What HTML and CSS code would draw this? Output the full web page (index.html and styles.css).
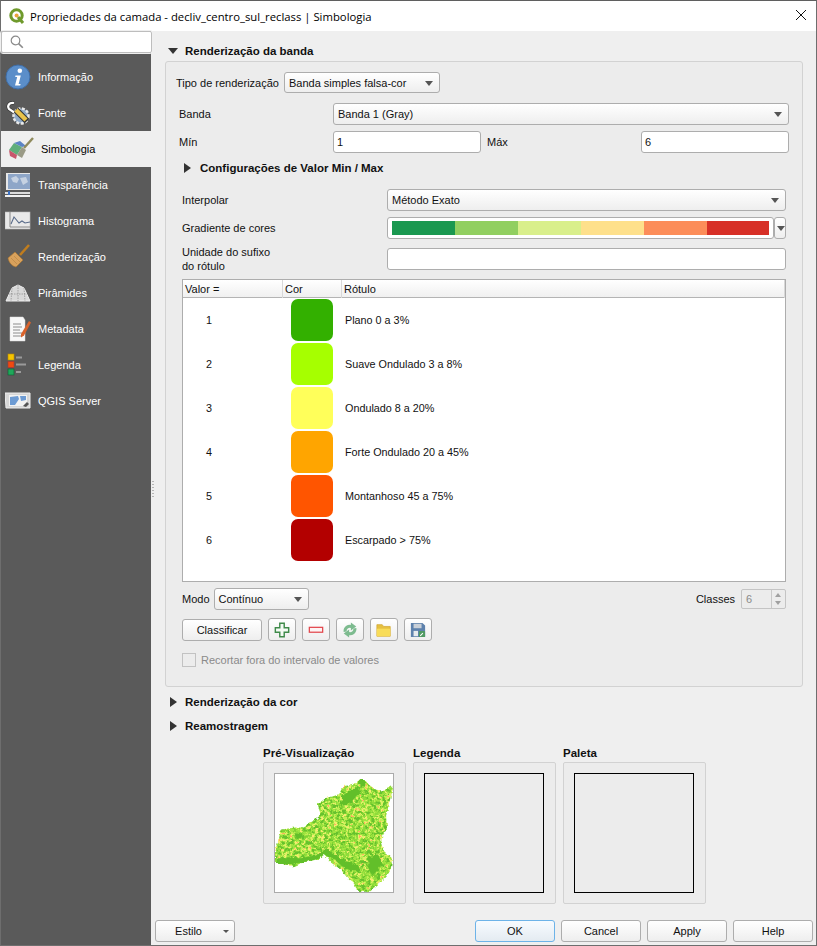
FILE: index.html
```html
<!DOCTYPE html>
<html lang="pt-BR">
<head>
  <meta charset="UTF-8" />
  <title>Propriedades da camada - decliv_centro_sul_reclass | Simbologia</title>
  <link rel="stylesheet" href="styles.css">
</head>
<body>

<div class="window">
  <header class="titlebar">
    <svg class="logo" viewBox="0 0 16 16">
      <circle cx="7.5" cy="7.5" r="5.7" fill="none" stroke="#6f9a2c" stroke-width="3"/>
      <path d="M9 9l5 6" stroke="#6f9a2c" stroke-width="3"/>
      <circle cx="7.6" cy="7.6" r="2" fill="#e8a33a"/>
    </svg>
    <span class="title-text">Propriedades da camada - decliv_centro_sul_reclass | Simbologia</span>
    <svg class="close" viewBox="0 0 10 10"><path d="M0 0l10 10M10 0L0 10" stroke="#111" stroke-width="1" fill="none"/></svg>
  </header>

  <div class="dialog-body">
    <nav class="sidebar">
      <div class="search">
        <svg class="search-icon" viewBox="0 0 14 14"><circle cx="5.5" cy="5.5" r="4.3" fill="none" stroke="#8a8a8a" stroke-width="1.2"/><path d="M8.6 8.6l4.2 4.2" stroke="#8a8a8a" stroke-width="1.6"/></svg>
      </div>
      <ul class="nav-list">
        <li class="nav-item">
          <svg class="nav-icon" viewBox="0 0 26 26">
            <circle cx="13" cy="13" r="12" fill="#5b8ec9" stroke="#3f6da6"/>
            <circle cx="14.8" cy="6.8" r="2.3" fill="#fff"/>
            <path d="M10.5 11.5h5.3l-2.2 8.5h2l-.4 1.6h-5.2l2.2-8.5h-2z" fill="#fff"/>
          </svg>
          <span>Informação</span>
        </li>
        <li class="nav-item">
          <svg class="nav-icon" viewBox="0 0 26 26">
            <circle cx="16" cy="16" r="7.5" fill="#8fa9c6" stroke="#e9e9e9" stroke-width="2.5" stroke-dasharray="3 1.5"/>
            <path d="M9 3C4 2 2 6 4 9l6 4" fill="none" stroke="#333" stroke-width="3.4"/>
            <path d="M9 3C4 2 2 6 4 9l6 4" fill="none" stroke="#fff" stroke-width="2.2"/>
            <path d="M11 10l11 11" stroke="#333" stroke-width="6.4"/>
            <path d="M11 10l10 10" stroke="#e9c24a" stroke-width="4.4"/>
          </svg>
          <span>Fonte</span>
        </li>
        <li class="nav-item active">
          <svg class="nav-icon" viewBox="0 0 26 26">
            <path d="M1 14l5-7 8 4-5 8z" fill="#5fae7a"/>
            <path d="M6 7l6-2 6 5-4 1z" fill="#5b84c4"/>
            <path d="M1 14l8 5-1 4-6-3z" fill="#c8566c"/>
            <path d="M9 19l5-8 4 3-4 8z" fill="#9a9a86"/>
            <path d="M16 12l9-10" stroke="#8f8a5c" stroke-width="2.4"/>
          </svg>
          <span>Simbologia</span>
        </li>
        <li class="nav-item">
          <svg class="nav-icon" viewBox="0 0 26 26">
            <rect x="1" y="1" width="24" height="17" fill="#e8e8e8"/>
            <rect x="3" y="2" width="22" height="15" fill="#8ea6c8"/>
            <path d="M6 6l5-2 3 3-2 4-4-1zM15 6l6-1 2 5-5 3z" fill="#c6d2e2"/>
            <rect x="0" y="20" width="25" height="2" fill="#ddd"/>
            <rect x="3" y="19" width="2" height="5" fill="#3a6fc0"/>
            <rect x="0" y="23" width="25" height="2" fill="#f1f1f1"/>
          </svg>
          <span>Transparência</span>
        </li>
        <li class="nav-item">
          <svg class="nav-icon" viewBox="0 0 26 26">
            <rect x="0" y="4" width="25" height="17" fill="#e9e9e9" stroke="#bbb" stroke-width=".6"/>
            <path d="M5 4v15h20" fill="none" stroke="#888"/>
            <path d="M6 16l3-7 5 6 3-2 3 2 5-1" fill="none" stroke="#5a6c8a" stroke-width="1.1"/>
          </svg>
          <span>Histograma</span>
        </li>
        <li class="nav-item">
          <svg class="nav-icon" viewBox="0 0 26 26">
            <path d="M3 14l7-6 8 8-7 7c-4-1-7-4-8-9z" fill="#d8a15c" stroke="#a8742f" stroke-width=".6"/>
            <path d="M15 11l9-10" stroke="#c07d1e" stroke-width="2.6"/>
            <path d="M6 14l6 6M9 12l6 6" stroke="#b98543" stroke-width=".7"/>
          </svg>
          <span>Renderização</span>
        </li>
        <li class="nav-item">
          <svg class="nav-icon" viewBox="0 0 26 26">
            <path d="M1 21L7 8l6-3 6 3 6 13z" fill="#d9d9d9" stroke="#f0f0f0"/>
            <path d="M13 5v16M7 8l-1 13M19 8l1 13M4 14h18" stroke="#8a8a8a" stroke-width=".7" stroke-dasharray="1.5 1"/>
          </svg>
          <span>Pirâmides</span>
        </li>
        <li class="nav-item">
          <svg class="nav-icon" viewBox="0 0 26 26">
            <path d="M5 1h13l2 3v21H5z" fill="#f8f8f8" stroke="#ddd" stroke-width=".5"/>
            <path d="M8 8h8M8 11h9M8 14h7M8 17h9M8 20h9" stroke="#8c8c8c"/>
            <path d="M16 18l8-13 2 1.5-7 13-3 2z" fill="#d9622b"/>
          </svg>
          <span>Metadata</span>
        </li>
        <li class="nav-item">
          <svg class="nav-icon" viewBox="0 0 26 26">
            <rect x="3" y="2" width="6" height="6" fill="#f5c400" stroke="#b98a00" stroke-width=".6"/>
            <rect x="3" y="9.500" width="6" height="6" fill="#f04a10" stroke="#a33" stroke-width=".6"/>
            <rect x="3" y="17" width="6" height="6" fill="#1fa75a" stroke="#0a5f30" stroke-width=".6"/>
            <path d="M11 5.500h6M11 12.500h10M11 20h5" stroke="#9a9a9a" stroke-width="2"/>
          </svg>
          <span>Legenda</span>
        </li>
        <li class="nav-item">
          <svg class="nav-icon" viewBox="0 0 26 26">
            <path d="M0 5h25v15H1z" fill="#d6d6d6" stroke="#eee"/>
            <rect x="4" y="7" width="18" height="11" fill="#f2f2f2"/>
            <path d="M5 9l8-1 1 3-4 6-5 0zM15 8h6v4l-5 1z" fill="#6d9bd3"/>
            <path d="M18 18l4-4 2 2-3 3z" fill="#555"/>
          </svg>
          <span>QGIS Server</span>
        </li>
      </ul>
    </nav>

    <div class="splitter"></div>

    <main class="content">
      <div class="section-head"><span class="arrow-down"></span>Renderização da banda</div>

      <section class="group">
        <div class="row-tipo">
          <label class="lbl">Tipo de renderização</label>
          <div class="combo combo-tipo">Banda simples falsa-cor<span class="caret"></span></div>
        </div>

        <div class="row-band">
          <label class="lbl">Banda</label>
          <div class="combo">Banda 1 (Gray)<span class="caret"></span></div>
        </div>

        <div class="row-minmax">
          <label class="lbl">Mín</label>
          <div class="input">1</div>
          <label class="lbl">Máx</label>
          <div class="input">6</div>
        </div>

        <div class="sub-head"><span class="arrow-right"></span>Configurações de Valor Min / Max</div>

        <div class="color-form">
          <label class="lbl">Interpolar</label>
          <div class="combo">Método Exato<span class="caret"></span></div>

          <label class="lbl">Gradiente de cores</label>
          <div class="ramp-wrap">
            <div class="ramp">
              <span class="ramp-1"></span><span class="ramp-2"></span><span class="ramp-3"></span>
              <span class="ramp-4"></span><span class="ramp-5"></span><span class="ramp-6"></span>
            </div>
            <div class="ramp-drop"><span class="caret"></span></div>
          </div>

          <label class="lbl lbl-two">Unidade do sufixo<br>do rótulo</label>
          <div class="input"></div>
        </div>

        <div class="table">
          <div class="thead">
            <div class="th th-valor">Valor =</div>
            <div class="th th-cor">Cor</div>
            <div class="th th-label">Rótulo</div>
          </div>
          <div class="trow"><div class="td-val">1</div><div class="swatch swatch-1"></div><div>Plano 0 a 3%</div></div>
          <div class="trow"><div class="td-val">2</div><div class="swatch swatch-2"></div><div>Suave Ondulado 3 a 8%</div></div>
          <div class="trow"><div class="td-val">3</div><div class="swatch swatch-3"></div><div>Ondulado 8 a 20%</div></div>
          <div class="trow"><div class="td-val">4</div><div class="swatch swatch-4"></div><div>Forte Ondulado 20 a 45%</div></div>
          <div class="trow"><div class="td-val">5</div><div class="swatch swatch-5"></div><div>Montanhoso 45 a 75%</div></div>
          <div class="trow"><div class="td-val">6</div><div class="swatch swatch-6"></div><div>Escarpado &gt; 75%</div></div>
        </div>

        <div class="row-mode">
          <label class="lbl">Modo</label>
          <div class="combo combo-mode">Contínuo<span class="caret"></span></div>
          <label class="lbl lbl-classes">Classes</label>
          <div class="spin">6<span class="spin-arrows"><i class="up"></i><i class="down"></i></span></div>
        </div>

        <div class="row-actions">
          <button class="btn btn-classify">Classificar</button>
          <button class="btn-icon">
            <svg viewBox="0 0 18 18"><path d="M6.500 1.500h5v5h5v5h-5v5h-5v-5h-5v-5h5z" fill="#f4fbf4" stroke="#3f8a4a" stroke-width="1.6"/></svg>
          </button>
          <button class="btn-icon">
            <svg viewBox="0 0 18 18"><rect x="1.500" y="6" width="15" height="5.500" fill="#fdf4f4" stroke="#e2464c" stroke-width="1.4"/></svg>
          </button>
          <button class="btn-icon">
            <svg viewBox="0 0 18 18">
              <path d="M3.500 11C3 6.500 7 4 10.500 5" fill="none" stroke="#7dbb8f" stroke-width="3.400"/>
              <path d="M10 .5l6 4.500-6 4.500z" fill="#7dbb8f"/>
              <path d="M14.500 7C15 11.500 11 14 7.500 13" fill="none" stroke="#7dbb8f" stroke-width="3.400"/>
              <path d="M8 17.500L2 13l6-4.500z" fill="#7dbb8f"/>
            </svg>
          </button>
          <button class="btn-icon">
            <svg viewBox="0 0 18 18"><path d="M1 3h6l1.500 2H16v11H1z" fill="#e6c040" stroke="#d0a62e" stroke-width=".8"/><path d="M1 7.500h15V16H1z" fill="#f8dc58"/></svg>
          </button>
          <button class="btn-icon">
            <svg viewBox="0 0 18 18">
              <path d="M1 1h13l3 3v13H1z" fill="#5e82ad"/>
              <rect x="4" y="2" width="9" height="5" fill="#c9d0d8"/>
              <rect x="4" y="10" width="5" height="6" fill="#e7ebef"/>
              <rect x="10" y="10" width="7" height="7" rx="1" fill="#4f9a62"/>
              <path d="M11.500 15.500l3-3" stroke="#fff" stroke-width="1.200"/>
            </svg>
          </button>
        </div>

        <div class="row-check">
          <span class="checkbox"></span>
          <label class="lbl lbl-disabled">Recortar fora do intervalo de valores</label>
        </div>
      </section>

      <div class="section-head head-color"><span class="arrow-right"></span>Renderização da cor</div>
      <div class="section-head head-resample"><span class="arrow-right"></span>Reamostragem</div>

      <div class="previews">
        <div class="preview">
          <h3>Pré-Visualização</h3>
          <div class="preview-box">
            <svg class="preview-frame frame-map" viewBox="0 0 119 119">
              <defs>
                <filter id="terrain" x="0" y="0" width="100%" height="100%" color-interpolation-filters="sRGB">
                  <feTurbulence type="fractalNoise" baseFrequency="0.32" numOctaves="2" seed="7"/>
                  <feColorMatrix type="matrix" values="1 0 0 0 0  1 0 0 0 0  1 0 0 0 0  0 0 0 0 1"/>
                  <feComponentTransfer>
                    <feFuncR type="discrete" tableValues=".40 .40 .40 .40 .40 .40 .50 .56 .63 .76 .88 .97 1 1 1 1"/>
                    <feFuncG type="discrete" tableValues=".76 .76 .76 .76 .76 .76 .82 .86 .90 .93 .94 .92 .69 .69 .69 .69"/>
                    <feFuncB type="discrete" tableValues=".18 .18 .18 .18 .18 .18 .20 .23 .25 .33 .40 .44 .38 .38 .38 .38"/>
                  </feComponentTransfer>
                </filter>
                <filter id="rough" x="-5%" y="-5%" width="110%" height="110%">
                  <feTurbulence type="fractalNoise" baseFrequency="0.25" numOctaves="2" seed="3" result="n"/>
                  <feDisplacementMap in="SourceGraphic" in2="n" scale="4" xChannelSelector="R" yChannelSelector="G"/>
                </filter>
                <clipPath id="region">
                  <polygon points="86,5 90,5 95,11 102,16 110,17 115,12 119,14 115,30 112,42 113,55 108,63 107,70 110,78 118,85 117,96 112,104 102,113 94,119 83,118 80,111 74,106 66,96 56,89 50,81 44,86 29,89 19,93 9,91 -2,88 0,77 4,65 6,56 21,54 27,54 41,46 46,41 43,30 52,24 64,21 69,12 79,11"/>
                </clipPath>
              </defs>
              <g filter="url(#rough)">
                <g clip-path="url(#region)">
                  <rect width="119" height="119" filter="url(#terrain)"/>
                  <path d="M-2 91l6-6 22 0 16-3 10-7 8 6 12 7 12 4 2 5-10 0-8-4-10-8-8-3-14 6-16 2-14 3zM68 22l14-9 6 5-8 7-6 6-8 1zM94 84l10-3 4 9-6 9-4 3-4-6zM112 50l3 10-6 4zM20 60l8 2-6 4zM86 5h5l0 7-5 2z" fill="#62bf2c"/>
                </g>
              </g>
            </svg>
          </div>
        </div>
        <div class="preview">
          <h3>Legenda</h3>
          <div class="preview-box"><div class="preview-frame frame-black"></div></div>
        </div>
        <div class="preview">
          <h3>Paleta</h3>
          <div class="preview-box"><div class="preview-frame frame-black"></div></div>
        </div>
      </div>

      <footer class="buttons">
        <button class="btn btn-style">Estilo<span class="caret caret-small"></span></button>
        <div class="spacer"></div>
        <button class="btn btn-ok">OK</button>
        <button class="btn">Cancel</button>
        <button class="btn">Apply</button>
        <button class="btn">Help</button>
      </footer>
    </main>
  </div>
</div>

</body>
</html>
```

FILE: styles.css
```css
* {
    box-sizing: border-box;
}

html, body {
    margin: 0;
    padding: 0;
    height: 100%;
    overflow: hidden;
}

body {
    font-family: "Liberation Sans", Arial, sans-serif;
    font-size: 11px;
    color: #111;
    background-color: #efefef;
}

.window {
    width: 817px;
    height: 946px;
    display: flex;
    flex-direction: column;
    border: 1px solid #6e6e6e;
    border-top-color: #5f5f5f;
    background-color: #efefef;
}

/* title bar */
.titlebar {
    height: 30px;
    flex: none;
    display: flex;
    align-items: center;
    background-color: #fff;
    padding-left: 8px;
}

.logo {
    width: 16px;
    height: 16px;
    margin-right: 5px;
}

.title-text {
    font-family: "Open Sans", sans-serif;
    font-size: 11.3px;
    color: #000;
}

.close {
    width: 10px;
    height: 10px;
    margin-left: auto;
    margin-right: 10px;
    margin-top: -2px;
}

.dialog-body {
    flex: 1;
    display: flex;
    min-height: 0;
}

/* left list */
.sidebar {
    width: 150px;
    flex: none;
    background-color: #5a5a5a;
    display: flex;
    flex-direction: column;
}

.search {
    height: 22px;
    margin: 0 -1px 0 0;
    padding: 3px 0 0 8px;
    background-color: #fff;
    border: 1px solid #bdbdbd;
    border-radius: 2px;
    outline: 1px solid #efefef;
}

.search-icon {
    display: block;
    width: 14px;
    height: 14px;
}

.nav-list {
    list-style: none;
    margin: 0;
    padding: 6px 0 0;
}

.nav-item {
    height: 36px;
    display: flex;
    align-items: center;
    gap: 7px;
    padding-left: 4px;
    color: #fff;
}

.nav-item.active {
    background-color: #efefef;
    color: #000;
    padding-left: 7px;
}

.nav-icon {
    width: 26px;
    height: 26px;
    flex: none;
}

.splitter {
    width: 2px;
    height: 18px;
    flex: none;
    margin: 450px 1px 0;
    background: repeating-linear-gradient(#b5b5b5 0 1px, transparent 1px 3px);
}

/* right side */
.content {
    flex: 1;
    min-width: 0;
    display: flex;
    flex-direction: column;
    padding-left: 10px;
}

.section-head {
    display: flex;
    align-items: center;
    height: 20px;
    margin-top: 10px;
    padding-left: 3px;
    font-weight: bold;
    font-size: 11.5px;
    color: #111;
    flex: none;
}

.arrow-down {
    width: 0;
    height: 0;
    margin-right: 7px;
    border-left: 5.500px solid transparent;
    border-right: 5.500px solid transparent;
    border-top: 6px solid #333;
}

.arrow-right {
    width: 0;
    height: 0;
    margin-right: 8px;
    border-top: 5.500px solid transparent;
    border-bottom: 5.500px solid transparent;
    border-left: 7px solid #333;
}

.head-color {
    margin-top: 5px;
    padding-left: 5px;
}

.head-resample {
    margin-top: 4px;
    padding-left: 5px;
}

.group {
    width: 638px;
    height: 626px;
    flex: none;
    border: 1px solid #d2d2d2;
    border-radius: 3px;
    background-color: #ececec;
    padding: 10px 14px 0 10px;
}

.lbl {
    display: block;
    white-space: nowrap;
}

.combo {
    position: relative;
    height: 22px;
    line-height: 20px;
    padding-left: 4px;
    border: 1px solid #adadad;
    border-radius: 3px;
    background: linear-gradient(#ffffff, #eeeeee);
    white-space: nowrap;
}

.caret {
    position: absolute;
    right: 6px;
    top: 8px;
    width: 0;
    height: 0;
    border-left: 4.500px solid transparent;
    border-right: 4.500px solid transparent;
    border-top: 5px solid #555;
}

.input {
    height: 22px;
    line-height: 20px;
    padding-left: 3px;
    background-color: #fff;
    border: 1px solid #adadad;
    border-radius: 3px;
}

.row-tipo {
    display: flex;
    align-items: center;
    gap: 5px;
    height: 21px;
}

.combo-tipo {
    width: 156px;
    height: 21px;
}

.row-band {
    display: grid;
    grid-template-columns: 154px 456px;
    align-items: center;
    margin-top: 10px;
    padding-left: 3px;
}

.row-minmax {
    display: grid;
    grid-template-columns: 154px 148px 160px 148px;
    align-items: center;
    margin-top: 6px;
    padding-left: 3px;
}

.row-minmax .lbl:nth-child(3) {
    padding-left: 6px;
}

.sub-head {
    display: flex;
    align-items: center;
    height: 20px;
    margin-top: 5px;
    padding-left: 8px;
    font-weight: bold;
    font-size: 11.5px;
}

.sub-head .arrow-right {
    margin-right: 9px;
}

.color-form {
    display: grid;
    grid-template-columns: 205px 399px;
    grid-auto-rows: 22px;
    row-gap: 6px;
    align-items: center;
    margin-top: 11px;
    padding-left: 6px;
}

.color-form > .input:last-child {
    margin-top: 5px;
}

.lbl-two {
    line-height: 14px;
    margin-top: 5px;
}

.ramp-wrap {
    display: flex;
    height: 22px;
}

.ramp {
    width: 387px;
    padding: 3px 4px;
    display: flex;
    background-color: #fff;
    border: 1px solid #adadad;
    border-radius: 3px;
}

.ramp span {
    flex: none;
    width: 63px;
    display: block;
}

.ramp-1 { background-color: #1a9850; }
.ramp-2 { background-color: #91cf60; }
.ramp-3 { background-color: #d9ef8b; }
.ramp-4 { background-color: #fee08b; }
.ramp-5 { background-color: #fc8d59; }
.ramp .ramp-6 { background-color: #d73027; width: 62px; }

.ramp-drop {
    position: relative;
    width: 12px;
    border: 1px solid #adadad;
    border-radius: 3px;
    background: linear-gradient(#ffffff, #eeeeee);
}

.ramp-drop .caret {
    right: 0;
    top: 8px;
}

/* class table */
.table {
    width: 604px;
    height: 303px;
    margin: 12px 0 0 6px;
    background-color: #fff;
    border: 1px solid #adadad;
}

.thead {
    display: grid;
    grid-template-columns: 100px 59px 1fr;
    height: 18px;
    border-bottom: 1px solid #b4b4b4;
    background: linear-gradient(#ffffff, #f0f0f0);
}

.th {
    line-height: 18px;
    padding-left: 2px;
    border-right: 1px solid #d8d8d8;
}

.trow {
    display: grid;
    grid-template-columns: 108px 54px 1fr;
    align-items: center;
    height: 44px;
    font-size: 10.8px;
}

.td-val {
    padding-left: 23px;
}

.swatch {
    width: 42px;
    height: 42px;
    border-radius: 7px;
}

.swatch-1 { background-color: #33b000; }
.swatch-2 { background-color: #a6ff00; }
.swatch-3 { background-color: #ffff5a; }
.swatch-4 { background-color: #ffa500; }
.swatch-5 { background-color: #ff5500; }
.swatch-6 { background-color: #b30000; }

.row-mode {
    display: flex;
    align-items: center;
    margin: 6px 0 0 6px;
    width: 604px;
    gap: 4px;
    height: 22px;
}

.combo-mode {
    width: 95px;
}

.lbl-classes {
    margin-left: auto;
    margin-right: 2px;
}

.spin {
    position: relative;
    width: 45px;
    height: 20px;
    line-height: 18px;
    padding-left: 4px;
    color: #8a8a8a;
    border: 1px solid #c4c4c4;
    border-radius: 2px;
    background-color: #ececec;
}

.spin-arrows {
    position: absolute;
    right: 0;
    top: 0;
    bottom: 0;
    width: 14px;
    border-left: 1px solid #c8c8c8;
}

.spin-arrows i {
    position: absolute;
    left: 3px;
    width: 0;
    height: 0;
    border-left: 3.500px solid transparent;
    border-right: 3.500px solid transparent;
}

.spin-arrows .up {
    top: 3px;
    border-bottom: 4px solid #a0a0a0;
}

.spin-arrows .down {
    bottom: 3px;
    border-top: 4px solid #a0a0a0;
}

.row-actions {
    display: flex;
    align-items: center;
    gap: 6px;
    margin: 8px 0 0 6px;
    height: 23px;
}

.btn {
    width: 80px;
    height: 22px;
    padding: 0;
    font: inherit;
    color: #111;
    border: 1px solid #adadad;
    border-radius: 3px;
    background: linear-gradient(#ffffff, #eeeeee);
}

.btn-icon {
    width: 28px;
    height: 23px;
    padding: 0;
    display: flex;
    align-items: center;
    justify-content: center;
    border: 1px solid #adadad;
    border-radius: 3px;
    background: linear-gradient(#ffffff, #eeeeee);
}

.btn-icon svg {
    width: 16px;
    height: 16px;
}

.row-check {
    display: flex;
    align-items: center;
    gap: 5px;
    margin: 11px 0 0 6px;
    height: 16px;
}

.checkbox {
    width: 14px;
    height: 14px;
    background-color: #ececec;
    border: 1px solid #c2c2c2;
}

.lbl-disabled {
    color: #8a8a8a;
}

/* preview boxes */
.previews {
    display: flex;
    gap: 7px;
    margin: 7px 0 0 98px;
    flex: none;
}

.preview {
    width: 143px;
}

.preview h3 {
    margin: 0;
    height: 19px;
    line-height: 21px;
    font-size: 11.5px;
    font-weight: bold;
    color: #111;
}

.preview-box {
    height: 142px;
    padding: 10px 0 0 10px;
    border: 1px solid #d2d2d2;
    border-radius: 2px;
    background-color: #ececec;
}

.preview-frame {
    display: block;
    width: 120px;
    height: 120px;
}

.frame-map {
    background-color: #fff;
    border: 1px solid #ababab;
}

.frame-black {
    border: 1px solid #000;
}

/* bottom row */
.buttons {
    flex: none;
    display: flex;
    gap: 6px;
    height: 22px;
    margin: auto 3px 3px -10px;
}

.spacer {
    flex: 1;
}

.btn-style {
    position: relative;
    padding-right: 13px;
}

.caret-small {
    top: 9px;
    right: 5px;
    border-left-width: 3px;
    border-right-width: 3px;
    border-top-width: 3px;
}

.btn-ok {
    border-color: #6db3e8;
    background: linear-gradient(#f7fbff, #e4ebf1);
}
```
